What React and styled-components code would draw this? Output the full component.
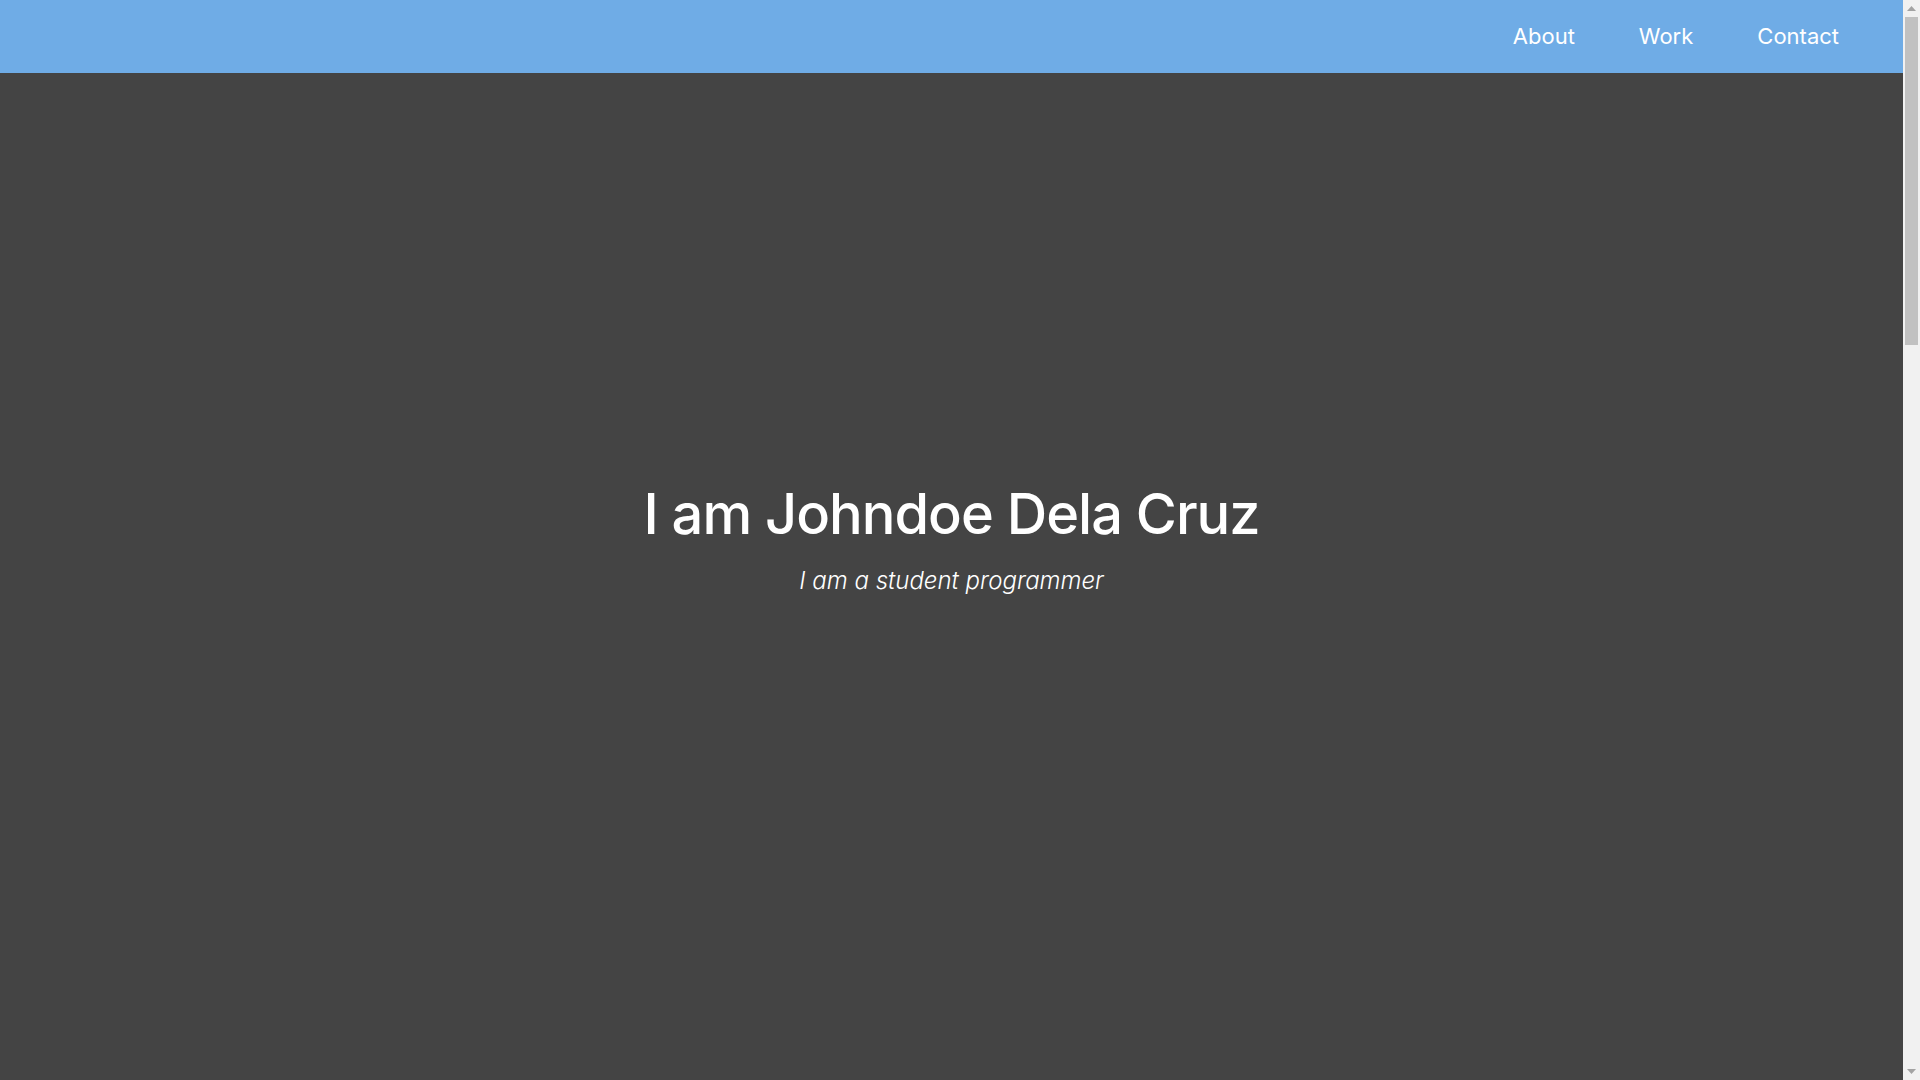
import React from "react";
import styled, { createGlobalStyle } from "styled-components";

const GlobalStyle = createGlobalStyle`
  html, body {
    margin: 0;
    padding: 0;
    height: 100%;
    overflow: hidden;
    background-color: #444444;
    font-family: Inter, "Open Sans", sans-serif;
  }
`;

export const Frame = styled.div`
  display: flex;
  height: 100vh;
`;

export const Page = styled.div`
  flex: 1;
  overflow-y: scroll;
  scrollbar-width: none;
  background-color: #444444;

  &::-webkit-scrollbar {
    display: none;
  }
`;

export const ScrollTrack = styled.div`
  width: 17px;
  background-color: #f1f1f1;
  display: flex;
  flex-direction: column;
  align-items: center;
`;

export const ScrollArrow = styled.div`
  height: 17px;
  width: 17px;
  display: flex;
  align-items: center;
  justify-content: center;
`;

export const ScrollThumb = styled.div`
  width: 13px;
  height: 328px;
  background-color: #c1c1c1;
`;

export const ScrollSpace = styled.div`
  flex: 1;
`;

export const NavBar = styled.nav`
  position: sticky;
  top: 0;
  height: 73px;
  background-color: #6face6;
  display: flex;
  justify-content: flex-end;
  align-items: center;
  padding-right: 32px;
  z-index: 10;
`;

export const NavLink = styled.a`
  font-family: Inter, sans-serif;
  font-weight: 400;
  font-size: 22px;
  color: #ffffff;
  text-decoration: none;
  padding: 0 32px;
  margin-top: -2px;
`;

export const Hero = styled.section`
  height: 100vh;
  margin-top: -73px;
  padding-bottom: 5px;
  box-sizing: border-box;
  display: flex;
  flex-direction: column;
  justify-content: center;
  align-items: center;
  color: #ffffff;
`;

export const Title = styled.h1`
  font-family: Inter, sans-serif;
  font-weight: 500;
  font-size: 56px;
  letter-spacing: -1px;
  margin: 0;
`;

export const SubTitle = styled.p`
  font-family: Inter, sans-serif;
  font-style: italic;
  font-weight: 300;
  font-size: 24px;
  margin: 18px 0 0;
`;

export const Section = styled.section`
  height: 788px;
`;

const Arrow = ({ down }) => (
  <svg width="9" height="5" viewBox="0 0 9 5">
    <path d={down ? "M0 0 L9 0 L4.5 5 Z" : "M0 5 L9 5 L4.5 0 Z"} fill="#a3a3a3" />
  </svg>
);

const App = () => {
  return (
    <Frame>
      <GlobalStyle />
      <Page>
        <NavBar>
          <NavLink href="#about">About</NavLink>
          <NavLink href="#work">Work</NavLink>
          <NavLink href="#contact">Contact</NavLink>
        </NavBar>
        <Hero>
          <Title>I am Johndoe Dela Cruz</Title>
          <SubTitle>I am a student programmer</SubTitle>
        </Hero>
        <Section id="about" />
        <Section id="work" />
        <Section id="contact" />
      </Page>
      <ScrollTrack>
        <ScrollArrow>
          <Arrow />
        </ScrollArrow>
        <ScrollThumb />
        <ScrollSpace />
        <ScrollArrow>
          <Arrow down />
        </ScrollArrow>
      </ScrollTrack>
    </Frame>
  );
};

export default App;
